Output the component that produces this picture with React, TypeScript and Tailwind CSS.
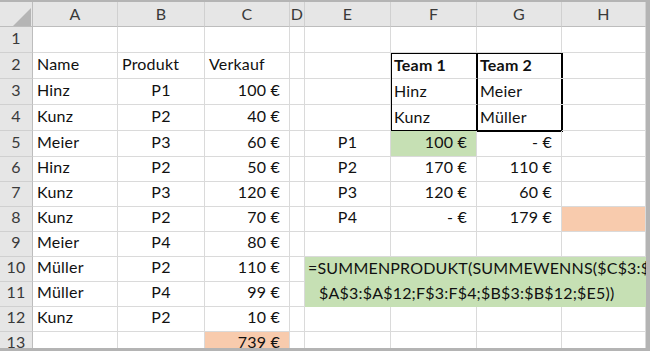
type Cell = { t?: string; a?: 'l' | 'c' | 'r'; bg?: string } | null;

const L = (t: string): Cell => ({ t, a: 'l' });
const C = (t: string): Cell => ({ t, a: 'c' });
const R = (t: string, bg?: string): Cell => ({ t, a: 'r', bg });
const E: Cell = {};

const GREEN = 'bg-[#c6e0b4]';
const ORANGE = 'bg-[#f8cbad]';

// null = covered by the team box or the formula block
const rows: Cell[][] = [
  [E, E, E, E, E, E, E, E],
  [L('Name'), L('Produkt'), L('Verkauf'), E, E, null, null, E],
  [L('Hinz'), C('P1'), R('100 €'), E, E, null, null, E],
  [L('Kunz'), C('P2'), R('40 €'), E, E, null, null, E],
  [L('Meier'), C('P3'), R('60 €'), E, C('P1'), R('100 €', GREEN), R('- €'), E],
  [L('Hinz'), C('P2'), R('50 €'), E, C('P2'), R('170 €'), R('110 €'), E],
  [L('Kunz'), C('P3'), R('120 €'), E, C('P3'), R('120 €'), R('60 €'), E],
  [L('Kunz'), C('P2'), R('70 €'), E, C('P4'), R('- €'), R('179 €'), { bg: ORANGE }],
  [L('Meier'), C('P4'), R('80 €'), E, E, E, E, E],
  [L('Müller'), C('P2'), R('110 €'), E, null, null, null, null],
  [L('Müller'), C('P4'), R('99 €'), E, null, null, null, null],
  [L('Kunz'), C('P2'), R('10 €'), E, E, E, E, E],
  [E, E, R('739 €', ORANGE), E, E, E, E, E],
];

const letters = ['A', 'B', 'C', 'D', 'E', 'F', 'G', 'H'];

const align = {
  l: 'justify-start pl-[4px]',
  c: 'justify-center',
  r: 'justify-end pr-[9px]',
};

function Corner() {
  return (
    <div className="relative border-r border-b border-[#bdbdbd] bg-[#e6e6e6]">
      <svg className="absolute left-[13px] top-[6px]" width="18" height="18" viewBox="0 0 18 18">
        <polygon points="18,0 18,18 0,18" fill="#b5b5b5" />
      </svg>
    </div>
  );
}

function TeamBox() {
  const cell = 'flex items-end pb-[1px] pl-[2px]';
  return (
    <div className="col-start-7 col-span-2 row-start-3 row-span-3 -m-px grid grid-cols-[86px_84px] grid-rows-[25px_26px_25px] border-2 border-black bg-white">
      <div className={`${cell} border-r-2 border-b border-r-black border-b-[#dadada] font-bold`}>Team 1</div>
      <div className={`${cell} border-b border-[#dadada] font-bold`}>Team 2</div>
      <div className={`${cell} border-r-2 border-b border-r-black border-b-[#dadada]`}>Hinz</div>
      <div className={`${cell} border-b border-[#dadada]`}>Meier</div>
      <div className={`${cell} border-r-2 border-r-black`}>Kunz</div>
      <div className={cell}>Müller</div>
    </div>
  );
}

function Formula() {
  return (
    <div className="col-start-6 col-span-4 row-start-11 row-span-2 flex flex-col overflow-hidden whitespace-nowrap bg-[#c6e0b4]">
      <div className="flex h-[25px] items-end pb-[2px] pl-[3px]">=SUMMENPRODUKT(SUMMEWENNS($C$3:$C$12;</div>
      <div className="flex h-[25px] items-end pb-[2px] pl-[14px]">$A$3:$A$12;F$3:F$4;$B$3:$B$12;$E5))</div>
    </div>
  );
}

export default function App() {
  return (
    <div className="flex h-[351px] w-[650px] flex-col border-t-2 border-r-4 border-b-[3px] border-[#b4b4b4] bg-white font-['Lato',sans-serif] text-[16px] tracking-[0.2px] text-[#111]">
      <div className="flex-1 overflow-hidden">
        <div className="grid grid-cols-[33px_85px_87px_85px_15px_86px_86px_85px_84px] grid-rows-[25px_26px_26px_26px_26px_26px_25px_25px_25px_25px_25px_25px_25px_25px]">
          <Corner />
          {letters.map((l) => (
            <div
              key={l}
              className="flex items-end justify-center border-r border-b border-r-[#d0d0d0] border-b-[#bdbdbd] bg-[#e6e6e6] text-[#3a3a3a]"
            >
              {l}
            </div>
          ))}
          <TeamBox />
          <Formula />
          {rows.map((row, i) => [
            <div
              key={`n${i}`}
              className="flex items-end justify-center border-r border-b border-r-[#bdbdbd] border-b-[#d0d0d0] bg-[#e6e6e6] pb-[2px] text-[#3a3a3a]"
            >
              {i + 1}
            </div>,
            ...row.map((c, j) =>
              c === null ? null : (
                <div
                  key={`${i}-${j}`}
                  className={`flex items-end whitespace-nowrap border-r border-b border-[#dadada] pb-[2px] ${align[c.a ?? 'l']} ${c.bg ?? ''}`}
                >
                  {c.t}
                </div>
              ),
            ),
          ])}
        </div>
      </div>
    </div>
  );
}
